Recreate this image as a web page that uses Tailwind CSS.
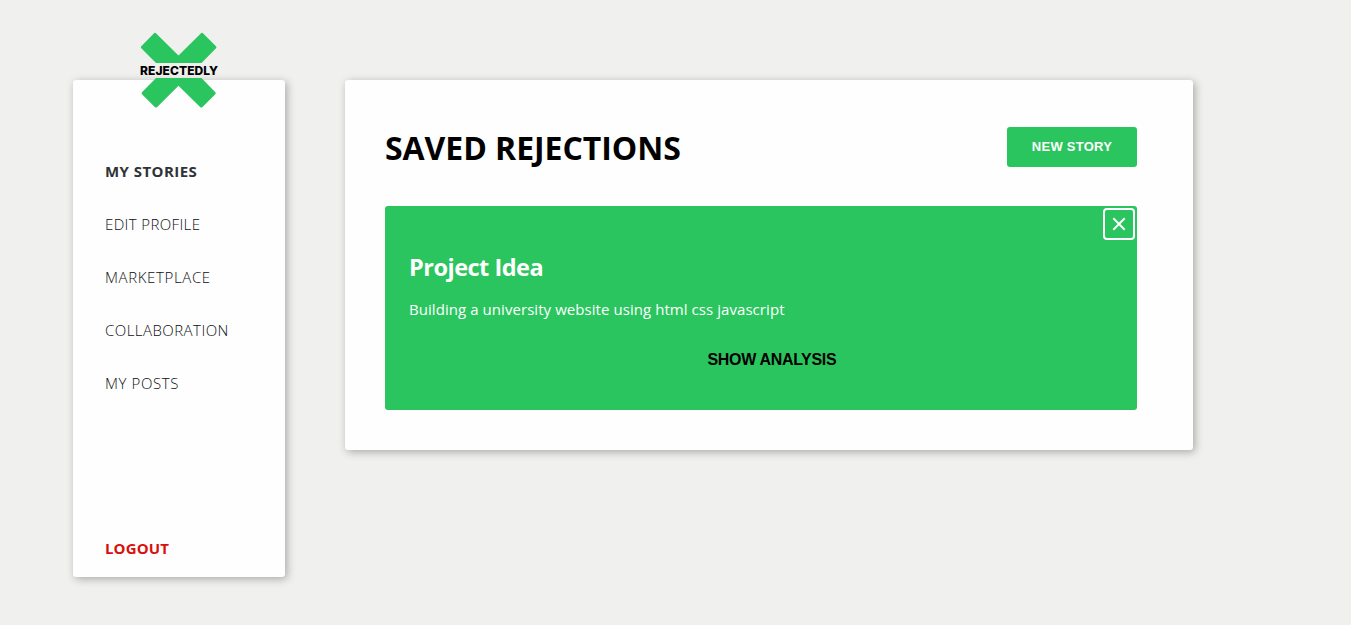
<!DOCTYPE html>
<html lang="en">
<head>
<meta charset="utf-8">
<title>Rejectedly</title>
<script src="https://cdn.jsdelivr.net/npm/@tailwindcss/browser@4"></script>
</head>
<body class="bg-[#f0f0ef] font-['Open_Sans','Noto_Sans',sans-serif]">
<div class="flex h-[625px] items-start gap-[60px] overflow-hidden pl-[73px] pt-20">
  <aside class="relative flex h-[497px] w-[212px] flex-col rounded-[3px] bg-[#fefefe] px-8 pt-[79px] shadow-[2px_2px_8px_rgba(0,0,0,0.3)]">
    <div class="absolute left-[66px] top-[-48px] h-[77px] w-[80px]">
      <svg class="h-full w-full" viewBox="139 32 80 77" fill="#2ac55e" aria-hidden="true">
        <path d="M156 63 141.3 48.3Q140.300 47.300 141.300 46.300L153.800 33.400Q155 32.200 156.200 33.400L178.500 55.500 200.800 33.400Q202 32.200 203.200 33.400L216 46.200Q217 47.200 216 48.200L201.500 63Z"/>
        <path d="M156 78H201.500L215.300 92.200Q216.300 93.200 215.300 94.200L202.500 107Q201.300 108.200 200.100 107L178.500 85.800 157.200 107Q156 108.200 154.800 107L142 94.200Q141 93.200 142 92.200Z"/>
      </svg>
      <span class="absolute left-px top-[31px] font-['Inter',sans-serif] text-[12px] font-extrabold leading-[15px] tracking-[0.08px] text-black">REJECTEDLY</span>
    </div>
    <nav class="flex flex-col items-start gap-[29px] text-[15px] leading-6 text-[#0c0f12]">
      <a class="font-bold tracking-[0.45px] text-[#2f3337]">MY STORIES</a>
      <a class="font-light tracking-[0.37px]">EDIT PROFILE</a>
      <a class="font-light tracking-[0.63px]">MARKETPLACE</a>
      <a class="font-light tracking-[0.46px]">COLLABORATION</a>
      <a class="font-light tracking-[0.6px]">MY POSTS</a>
    </nav>
    <a class="mb-[17px] mt-auto self-start text-[15px] font-bold leading-6 tracking-[0.15px] text-[#d90f0b]">LOGOUT</a>
  </aside>
  <main class="h-[370px] w-[848px] rounded-[3px] bg-[#fefefe] pl-10 pr-14 pt-[47px] shadow-[2px_2px_8px_rgba(0,0,0,0.3)]">
    <header class="flex items-start justify-between">
      <h1 class="-mt-px mb-px text-[32px] font-bold leading-[43px] tracking-[-0.05px] text-black">SAVED REJECTIONS</h1>
      <button class="h-10 w-[130px] rounded-[3px] bg-[#2ac55e] pb-px font-['Liberation_Sans',sans-serif] text-[13px] font-bold tracking-[0.25px] text-white">NEW STORY</button>
    </header>
    <article class="relative mt-9 flex h-[204px] flex-col rounded-[3px] bg-[#2ac55e] pl-6 pt-[46px] text-white">
      <button class="absolute right-0.5 top-0.5 flex size-8 items-center justify-center rounded-[4px] border-2 border-white" aria-label="Remove">
        <svg class="size-4" viewBox="0 0 16 16" fill="none" stroke="white" stroke-width="2"><path d="M2.300 2.300 13.700 13.700M13.700 2.300 2.300 13.700"/></svg>
      </button>
      <h2 class="-mt-px mb-px text-[23.500px] font-bold leading-8 tracking-[-0.5px]">Project Idea</h2>
      <p class="mt-[13px] text-[15px] leading-6 tracking-[0.06px]">Building a university website using html css javascript</p>
      <button class="ml-[298.500px] mt-[27px] self-start font-['Liberation_Sans',sans-serif] text-[16px] font-bold leading-6 tracking-[-0.33px] text-black">SHOW ANALYSIS</button>
    </article>
  </main>
</div>
</body>
</html>
